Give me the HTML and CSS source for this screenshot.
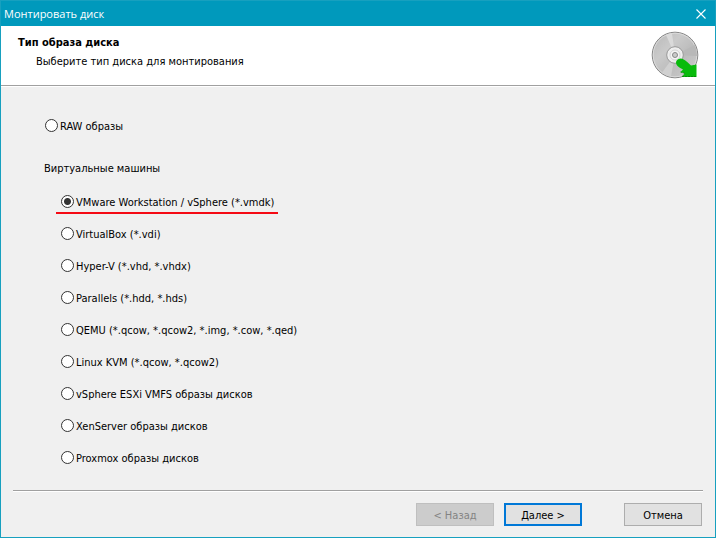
FILE: index.html
```html
<!DOCTYPE html>
<html lang="ru">

<head>
    <meta charset="UTF-8">
    <meta name="viewport" content="width=device-width, initial-scale=1.0">
    <title>Монтировать диск</title>
    <link rel="stylesheet" href="styles.css">
</head>

<body>
<form class="window">
    <div class="titlebar">
        <span>Монтировать диск</span>
        <button type="button" class="close" aria-label="Закрыть">
            <svg width="10" height="10" viewBox="0 0 10 10">
                <path d="M0.5 0.5L9.5 9.5M9.5 0.5L0.5 9.5" stroke="#fff" stroke-width="1.1"/>
            </svg>
        </button>
    </div>
    <header class="header">
        <div>
            <h1>Тип образа диска</h1>
            <p>Выберите тип диска для монтирования</p>
        </div>
        <svg class="disc" width="48" height="48" viewBox="0 0 48 48">
            <defs>
                <linearGradient id="metal" x1="0" y1="0" x2="1" y2="1">
                    <stop offset="0" stop-color="#b8b8b8"/>
                    <stop offset="0.35" stop-color="#cacaca"/>
                    <stop offset="0.6" stop-color="#bcbcbc"/>
                    <stop offset="1" stop-color="#cecece"/>
                </linearGradient>
            </defs>
            <circle cx="24" cy="24" r="22.8" fill="url(#metal)" stroke="#858585"/>
            <circle cx="24" cy="24" r="21.8" fill="none" stroke="#dedede" stroke-width="0.8"/>
            <path d="M24 24L15 4Q18 2.500 21 2.200Z" fill="#dadada"/>
            <path d="M24 24L20 45.500Q15 44.500 11 41.500Z" fill="#d0d0d0"/>
            <path d="M24 24L44 14Q46 19 46 25Z" fill="#b8b8b8"/>
            <circle cx="24" cy="24" r="8.300" fill="#eee" stroke="#999"/>
            <circle cx="24" cy="24" r="5" fill="#f4f4f4" stroke="#ccc" stroke-width="0.8"/>
            <circle cx="24" cy="24" r="2.500" fill="#c9c9c9" stroke="#888"/>
            <path d="M25 31Q26 27.500 30 27.500Q33 27.500 40 34.500L45.500 33.500V46H31L34 42.500L29.500 41L32 38.500Q24.500 35 25 31Z" fill="#08bb0c"/>
            <path d="M29.500 41L34 42.500L31 45.500H45.500" fill="none" stroke="#087c08" stroke-width="0.8" stroke-dasharray="2 1"/>
        </svg>
    </header>
    <main class="content">
        <label class="option"><input type="radio" name="image">RAW образы</label>
        <fieldset class="machines">
            <legend>Виртуальные машины</legend>
            <label class="option marked"><input type="radio" name="image" checked>VMware Workstation / vSphere (*.vmdk)</label>
            <label class="option"><input type="radio" name="image">VirtualBox (*.vdi)</label>
            <label class="option"><input type="radio" name="image">Hyper-V (*.vhd, *.vhdx)</label>
            <label class="option"><input type="radio" name="image">Parallels (*.hdd, *.hds)</label>
            <label class="option"><input type="radio" name="image">QEMU (*.qcow, *.qcow2, *.img, *.cow, *.qed)</label>
            <label class="option"><input type="radio" name="image">Linux KVM (*.qcow, *.qcow2)</label>
            <label class="option"><input type="radio" name="image">vSphere ESXi VMFS образы дисков</label>
            <label class="option"><input type="radio" name="image">XenServer образы дисков</label>
            <label class="option"><input type="radio" name="image">Proxmox образы дисков</label>
        </fieldset>
    </main>
    <footer class="footer">
        <button type="button" class="btn" disabled>&lt; Назад</button>
        <button type="submit" class="btn primary">Далее &gt;</button>
        <button type="button" class="btn cancel">Отмена</button>
    </footer>
</form>
</body>

</html>
```
FILE: styles.css
```css
* {
    box-sizing: border-box;
}

body {
    margin: 0;
    background: #f0f0f0;
    color: #000;
    font: 11px/14px Tahoma, "DejaVu Sans Condensed", "Noto Sans", sans-serif;
}

.window {
    display: flex;
    flex-direction: column;
    min-height: 100vh;
    border: 1px solid #17a0bf;
}

.titlebar {
    display: flex;
    align-items: center;
    justify-content: space-between;
    height: 25px;
    padding: 0 9px 0 3px;
    background: #0099bc;
    color: #fff;
    font: 11px/16px "Segoe UI", "Open Sans", sans-serif;
}

.close {
    display: flex;
    padding: 0;
    border: 0;
    background: none;
}

.header {
    display: flex;
    justify-content: space-between;
    height: 61px;
    padding: 10px 16px 0 17px;
    background: #fff;
    border-bottom: 1px solid #fff;
    box-shadow: inset 0 -1px #a0a0a0;
}

.header h1 {
    margin: 0 0 5px;
    font-size: 11px;
}

.header p {
    margin: 0 0 0 18px;
}

.disc {
    margin-top: -5px;
}

.content {
    flex: 1;
    padding: 23px 43px 0;
}

.option {
    display: flex;
    align-items: center;
    gap: 2px;
    width: fit-content;
    height: 32px;
    padding-top: 2px;
}

.option input {
    appearance: none;
    width: 13px;
    height: 13px;
    margin: 0 0 4px 1px;
    border: 1px solid #333;
    border-radius: 50%;
    background: #fff;
}

.option input:checked {
    background: radial-gradient(circle, #333 3px, #fff 4px);
}

.machines {
    margin: 18px 0 0;
    padding: 9px 0 0 16px;
    border: 0;
}

.machines legend {
    margin-left: -16px;
    padding: 1px 0 0;
    line-height: 16px;
}

/* red line under the recommended type */
.marked {
    position: relative;
}

.marked::after {
    content: "";
    position: absolute;
    left: -4px;
    right: -4px;
    bottom: 4px;
    height: 2px;
    background: #f50a14;
}

.footer {
    display: flex;
    justify-content: flex-end;
    gap: 10px;
    margin: 0 12px;
    padding: 12px 1px 11px;
    border-top: 1px solid #a0a0a0;
    box-shadow: inset 0 1px #fff;
}

.btn {
    width: 78px;
    height: 23px;
    padding: 2px 0 0;
    border: 1px solid #adadad;
    background: #e1e1e1;
    color: #000;
    font: inherit;
}

.btn:disabled {
    border-color: #bfbfbf;
    background: #ccc;
    color: #838383;
}

.btn.primary {
    border: 2px solid #0078d7;
}

.btn.cancel {
    margin-left: 32px;
}
```
